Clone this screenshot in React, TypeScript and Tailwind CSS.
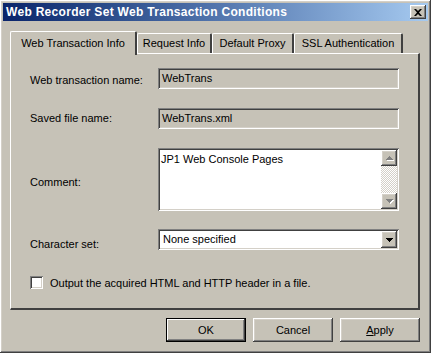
import React from "react";

const raised =
  "shadow-[inset_-1px_-1px_#404040,inset_1px_1px_#ffffff,inset_-2px_-2px_#808080,inset_2px_2px_#d4d0c8]";
const sunken =
  "shadow-[inset_1px_1px_#808080,inset_-1px_-1px_#ffffff,inset_2px_2px_#404040,inset_-2px_-2px_#d4d0c8]";

const Arrow = ({ up, disabled }: { up?: boolean; disabled?: boolean }) => (
  <svg width="9" height="6" viewBox="0 0 9 6">
    {disabled && (
      <path d={up ? "M4 1h1v1h1v1h1v1h1v1H1V4h1V3h1V2h1z" : "M1 1h7v1H7v1H6v1H5v1H4V4H3V3H2V2H1z"} fill="#ffffff" transform="translate(1 1)" />
    )}
    <path
      d={up ? "M4 1h1v1h1v1h1v1h1v1H1V4h1V3h1V2h1z" : "M1 1h7v1H7v1H6v1H5v1H4V4H3V3H2V2H1z"}
      fill={disabled ? "#808080" : "#000000"}
    />
  </svg>
);

const ScrollButton = ({ up, disabled }: { up?: boolean; disabled?: boolean }) => (
  <div className={`flex h-[16px] w-[16px] items-center justify-center bg-[#c6c2b7] ${raised}`}>
    <Arrow up={up} disabled={disabled} />
  </div>
);

const Field = ({ value }: { value: string }) => (
  <div className={`flex h-[21px] w-[241px] items-center pl-[4px] ${sunken}`}>{value}</div>
);

const Row = ({
  label,
  children,
  className = "",
  labelClass = "",
}: {
  label: string;
  children: React.ReactNode;
  className?: string;
  labelClass?: string;
}) => (
  <div className={`flex items-start ${className}`}>
    <div className={`w-[128px] ${labelClass}`}>{label}</div>
    {children}
  </div>
);

const Tab = ({ label, width, active }: { label: string; width: string; active?: boolean }) => (
  <div
    className={
      active
        ? `relative z-10 flex h-[24px] ${width} items-start justify-center rounded-tl-[2px] rounded-tr-[2px] border-l border-t border-r-2 border-l-white border-t-white border-r-[#404040] bg-[#c6c2b7] pt-[3px]`
        : `mt-[2px] flex h-[20px] ${width} items-center justify-center rounded-tl-[2px] rounded-tr-[2px] border-l border-t border-r-2 border-l-white border-t-white border-r-[#404040] bg-[#c6c2b7]`
    }
  >
    {label}
  </div>
);

const Button = ({ children, isDefault }: { children: React.ReactNode; isDefault?: boolean }) => (
  <div
    className={`flex h-[24px] w-[80px] items-center justify-center bg-[#c6c2b7] ${
      isDefault ? "border border-black shadow-[inset_-1px_-1px_#404040,inset_1px_1px_#ffffff,inset_-2px_-2px_#808080]" : raised
    }`}
  >
    {children}
  </div>
);

export default function App() {
  return (
    <div
      className={`flex h-[353px] w-[431px] flex-col bg-[#c6c2b7] p-[3px] font-['Liberation_Sans',Arial,sans-serif] text-[11px] text-black ${raised}`}
    >
      <div className="flex h-[18px] items-center bg-gradient-to-r from-[#0a246a] to-[#a6caf0] pl-[3px] pr-[2px]">
        <span className="flex-1 text-[12px] font-bold tracking-[0.3px] text-white">
          Web Recorder Set Web Transaction Conditions
        </span>
        <div className={`flex h-[14px] w-[16px] items-center justify-center bg-[#c6c2b7] ${raised}`}>
          <svg width="8" height="7" viewBox="0 0 8 7">
            <path d="M0 0h2l2 2 2-2h2L5 3.5 8 7H6L4 5 2 7H0l3-3.5z" fill="#000" />
          </svg>
        </div>
      </div>

      <div className="flex flex-1 flex-col pl-[7px] pr-[8px] pt-[10px]">
        <div className="-mb-[2px] flex items-start">
          <Tab label="Web Transaction Info" width="w-[127px]" active />
          <Tab label="Request Info" width="w-[75px]" />
          <Tab label="Default Proxy" width="w-[82px]" />
          <Tab label="SSL Authentication" width="w-[109px]" />
        </div>

        <div className="flex h-[257px] flex-col border-l border-t border-r-2 border-b-2 border-l-white border-t-white border-r-[#404040] border-b-[#404040] pl-[19px] pt-[14px]">
          <Row label="Web transaction name:" labelClass="mt-[4px]">
            <Field value="WebTrans" />
          </Row>
          <Row label="Saved file name:" className="mt-[19px]" labelClass="mt-[2px]">
            <Field value="WebTrans.xml" />
          </Row>
          <Row label="Comment:" className="mt-[19px]" labelClass="mt-[26px]">
            <div className={`flex h-[63px] w-[241px] bg-white p-[2px] ${sunken}`}>
              <div className="flex-1 pl-[1px] pt-[1px]">JP1 Web Console Pages</div>
              <div className="flex w-[16px] flex-col">
                <ScrollButton up disabled />
                <div className="flex-1 bg-[repeating-conic-gradient(#ffffff_0_25%,#d4d0c8_0_50%)] bg-[length:2px_2px]" />
                <ScrollButton disabled />
              </div>
            </div>
          </Row>
          <Row label="Character set:" className="mt-[18px]" labelClass="mt-[7px]">
            <div className={`flex h-[21px] w-[241px] items-center bg-white p-[2px] ${sunken}`}>
              <div className="flex-1 pl-[3px]">None specified</div>
              <div className={`flex h-[17px] w-[16px] items-center justify-center bg-[#c6c2b7] ${raised}`}>
                <Arrow />
              </div>
            </div>
          </Row>
          <div className="mt-[22px] flex items-center gap-[7px]">
            <div className={`h-[13px] w-[13px] bg-white ${sunken}`} />
            <span>Output the acquired HTML and HTTP header in a file.</span>
          </div>
        </div>

        <div className="mt-[8px] flex justify-end gap-[7px] pr-[0px]">
          <Button isDefault>OK</Button>
          <Button>Cancel</Button>
          <Button>
            <span>
              <span className="underline">A</span>pply
            </span>
          </Button>
        </div>
      </div>
    </div>
  );
}
